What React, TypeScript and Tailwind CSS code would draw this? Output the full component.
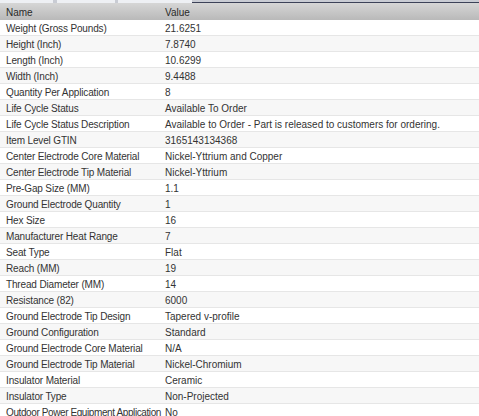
const rows: [string, string][] = [
  ["Weight (Gross Pounds)", "21.6251"],
  ["Height (Inch)", "7.8740"],
  ["Length (Inch)", "10.6299"],
  ["Width (Inch)", "9.4488"],
  ["Quantity Per Application", "8"],
  ["Life Cycle Status", "Available To Order"],
  ["Life Cycle Status Description", "Available to Order - Part is released to customers for ordering."],
  ["Item Level GTIN", "3165143134368"],
  ["Center Electrode Core Material", "Nickel-Yttrium and Copper"],
  ["Center Electrode Tip Material", "Nickel-Yttrium"],
  ["Pre-Gap Size (MM)", "1.1"],
  ["Ground Electrode Quantity", "1"],
  ["Hex Size", "16"],
  ["Manufacturer Heat Range", "7"],
  ["Seat Type", "Flat"],
  ["Reach (MM)", "19"],
  ["Thread Diameter (MM)", "14"],
  ["Resistance (82)", "6000"],
  ["Ground Electrode Tip Design", "Tapered v-profile"],
  ["Ground Configuration", "Standard"],
  ["Ground Electrode Core Material", "N/A"],
  ["Ground Electrode Tip Material", "Nickel-Chromium"],
  ["Insulator Material", "Ceramic"],
  ["Insulator Type", "Non-Projected"],
  ["Outdoor Power Equipment Application", "No"],
];

export default function App() {
  return (
    <div className="h-[416px] w-[479px] overflow-hidden bg-white font-['Liberation_Sans',Arial,sans-serif] text-[10px] text-[#333]">
      {/* tab strip */}
      <div className="flex h-[3px] bg-[#c9ccd4]">
        <div className="w-[53px] bg-[#eef0f4]" />
        <div className="ml-[4px] w-[58px] bg-[#eef0f4]" />
        <div className="ml-[3px] w-[74px] bg-[#eef0f4]" />
        <div className="flex flex-1 flex-col">
          <div className="h-[2px]" />
          <div className="h-[1px] bg-[#3c4258]" />
        </div>
      </div>
      {/* header */}
      <div className="flex h-[17px] items-center bg-gradient-to-b from-[#d6d6d6] to-[#b9b9b9] pt-px text-[#2a2a2a]">
        <div className="w-[165px] pl-[6px]">Name</div>
        <div className="flex-1">Value</div>
      </div>
      {rows.map(([name, value], i) => (
        <div
          key={name}
          className={`flex h-[16px] items-center border-b border-[#e6e6e6] pt-px ${i % 2 === 0 ? "bg-white" : "bg-[#f7f7f7]"}`}
        >
          <div
            className={`w-[165px] shrink-0 whitespace-nowrap pl-[6px] ${name.length > 32 ? "tracking-[-0.4px]" : "tracking-[-0.15px]"}`}
          >
            {name}
          </div>
          <div className="flex-1 whitespace-nowrap">{value}</div>
        </div>
      ))}
    </div>
  );
}
